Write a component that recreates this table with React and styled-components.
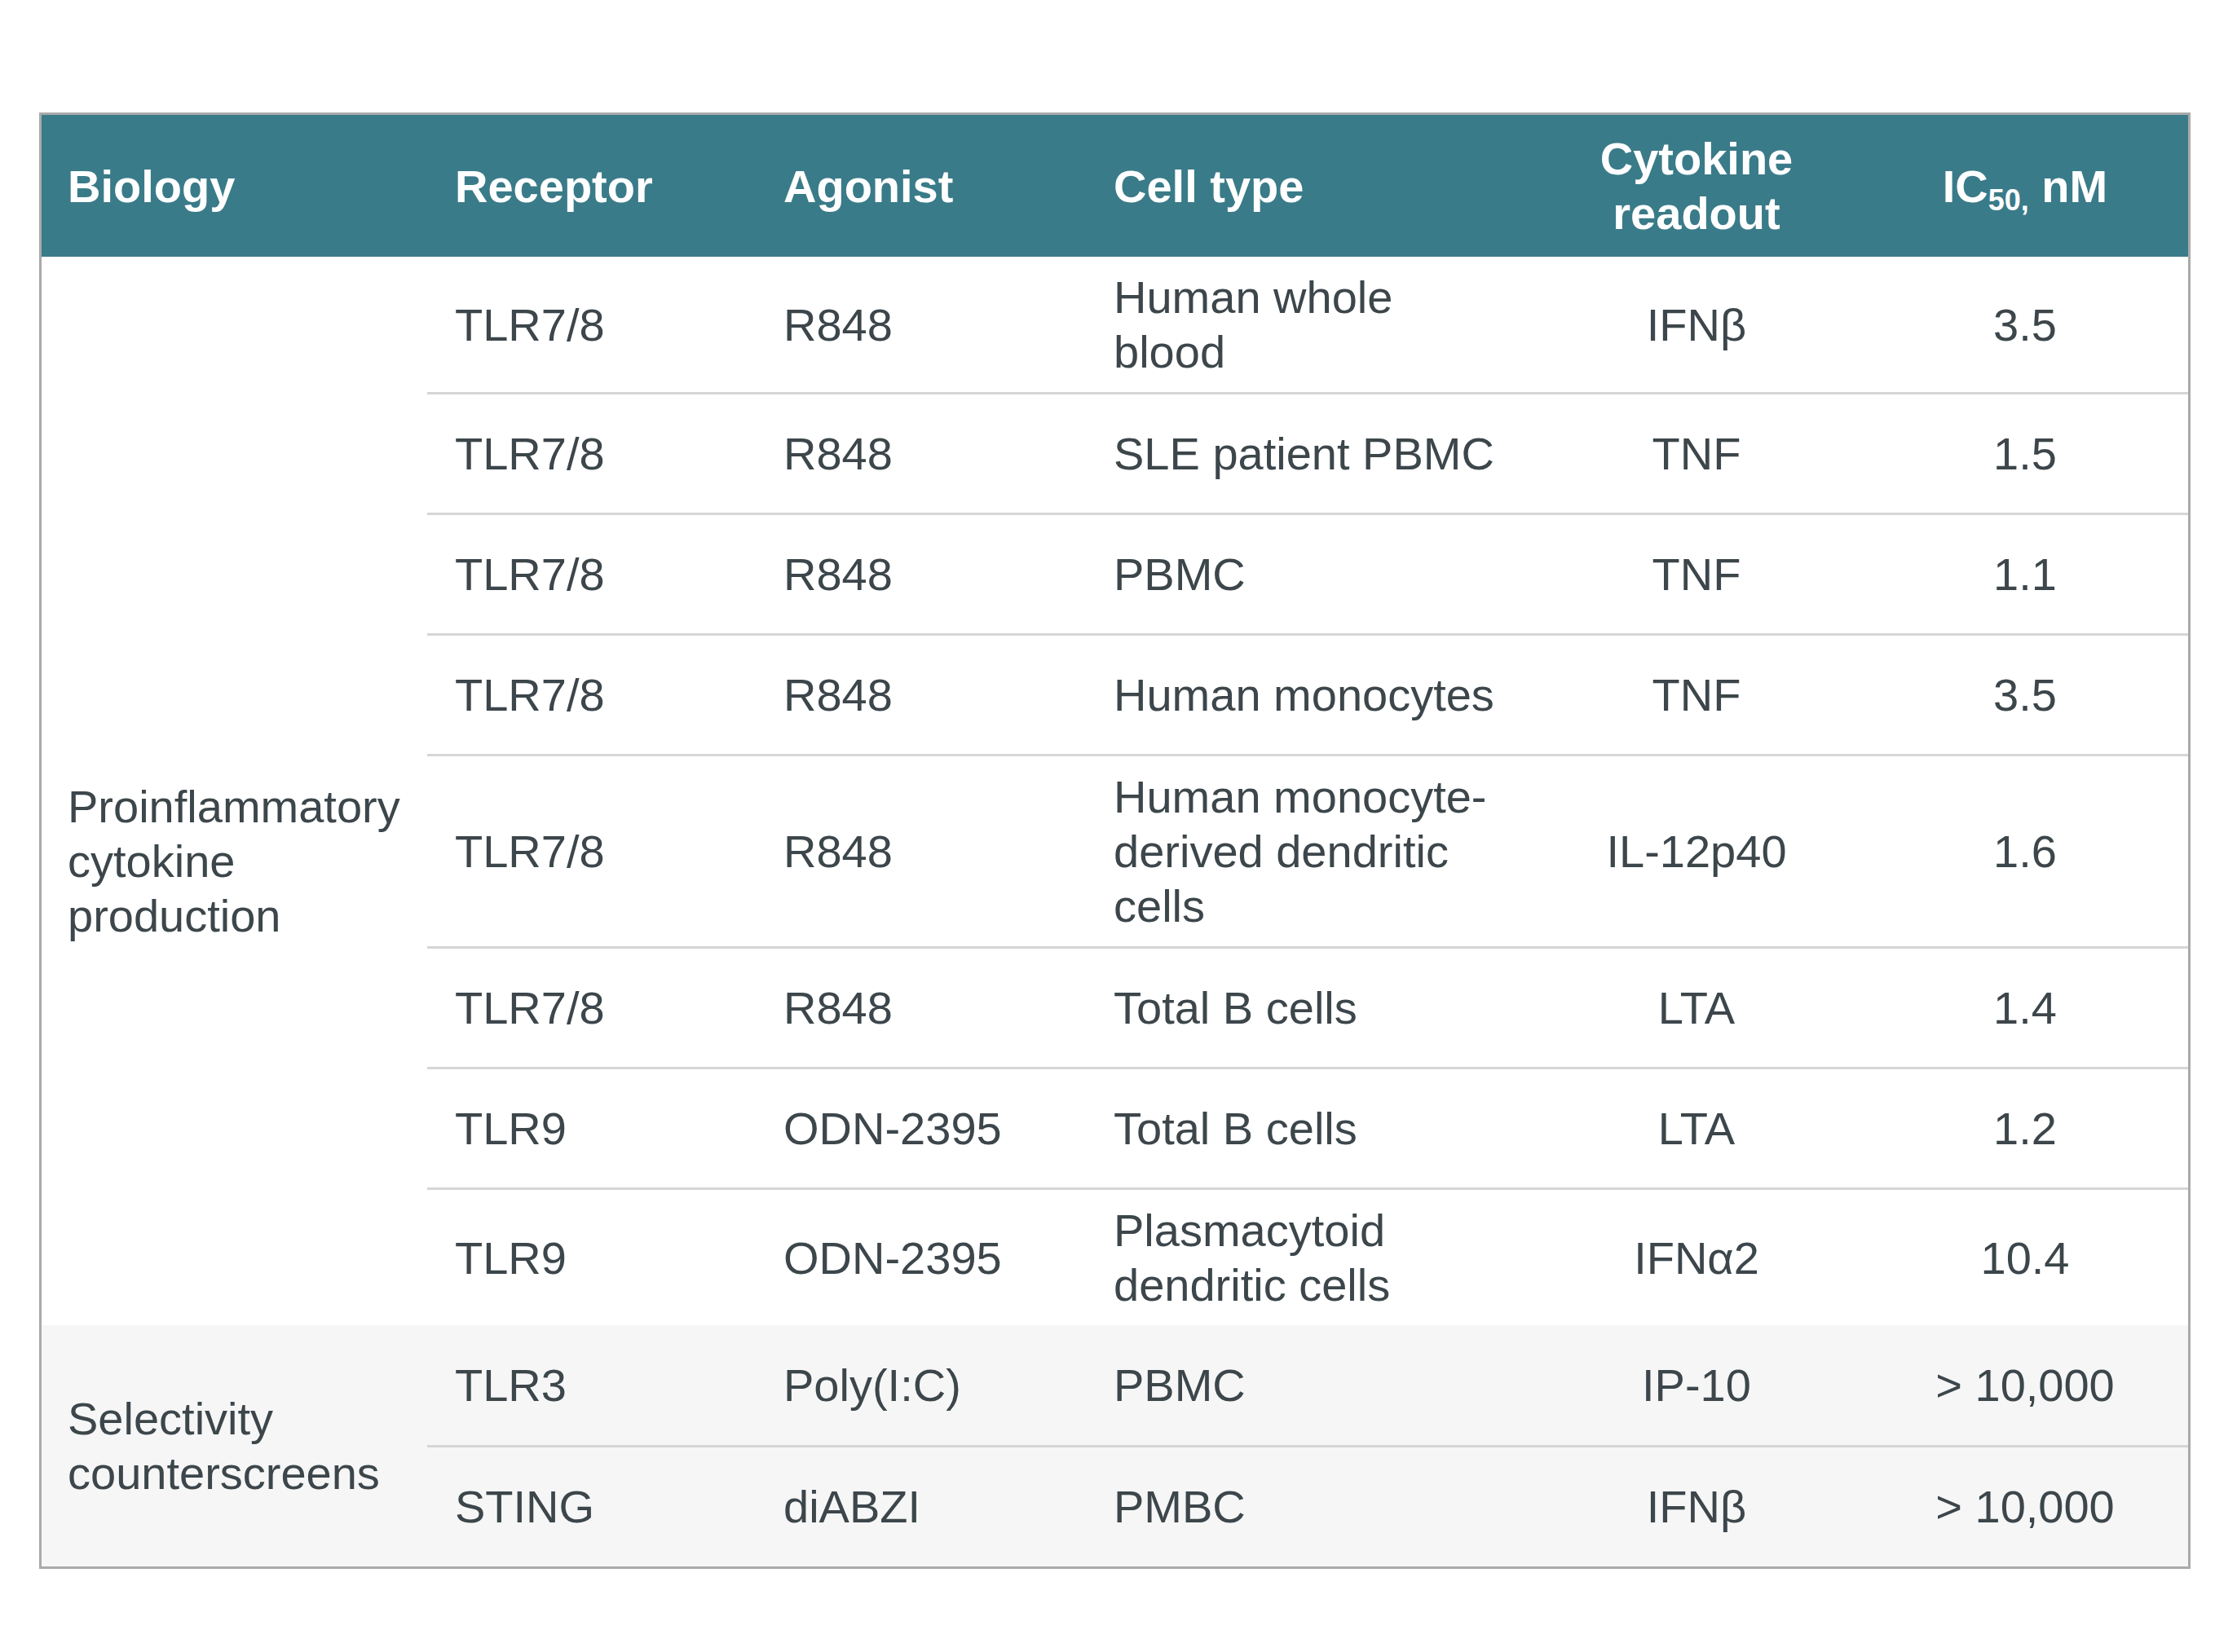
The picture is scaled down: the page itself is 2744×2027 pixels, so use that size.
import React from "react";
import styled, { createGlobalStyle } from "styled-components";

const GlobalStyle = createGlobalStyle`
  body {
    margin: 0;
    background: #ffffff;
    font-family: "Liberation Sans", Arial, sans-serif;
  }
`;

const rows = [
  { receptor: "TLR7/8", agonist: "R848", cell: "Human whole blood", readout: "IFNβ", ic50: "3.5" },
  { receptor: "TLR7/8", agonist: "R848", cell: "SLE patient PBMC", readout: "TNF", ic50: "1.5" },
  { receptor: "TLR7/8", agonist: "R848", cell: "PBMC", readout: "TNF", ic50: "1.1" },
  { receptor: "TLR7/8", agonist: "R848", cell: "Human monocytes", readout: "TNF", ic50: "3.5" },
  { receptor: "TLR7/8", agonist: "R848", cell: "Human monocyte-derived dendritic cells", readout: "IL-12p40", ic50: "1.6" },
  { receptor: "TLR7/8", agonist: "R848", cell: "Total B cells", readout: "LTA", ic50: "1.4" },
  { receptor: "TLR9", agonist: "ODN-2395", cell: "Total B cells", readout: "LTA", ic50: "1.2" },
  { receptor: "TLR9", agonist: "ODN-2395", cell: "Plasmacytoid dendritic cells", readout: "IFNα2", ic50: "10.4" },
];

const counters = [
  { receptor: "TLR3", agonist: "Poly(I:C)", cell: "PBMC", readout: "IP-10", ic50: "> 10,000" },
  { receptor: "STING", agonist: "diABZI", cell: "PMBC", readout: "IFNβ", ic50: "> 10,000" },
];

export default function App() {
  const renderGroup = (list, label, shaded, offset) =>
    list.map((r, i) => {
      const line = i < list.length - 1;
      return (
        <Row key={label + i} $shaded={shaded}>
          {i === 0 && (
            <GroupCell rowSpan={list.length} $offset={offset}>
              {label}
            </GroupCell>
          )}
          <Cell $line={line}>{r.receptor}</Cell>
          <Cell $line={line}>{r.agonist}</Cell>
          <Cell $line={line}>{r.cell}</Cell>
          <Cell $center $line={line}>{r.readout}</Cell>
          <Cell $center $line={line}>{r.ic50}</Cell>
        </Row>
      );
    });

  return (
    <Page>
      <GlobalStyle />
      <Frame>
        <Table>
          <colgroup>
            <col style={{ width: 473 }} />
            <col style={{ width: 403 }} />
            <col style={{ width: 405 }} />
            <col style={{ width: 546 }} />
            <col style={{ width: 406 }} />
            <col style={{ width: 400 }} />
          </colgroup>
          <thead>
            <HeadRow>
              <HeadCell $first>Biology</HeadCell>
              <HeadCell>Receptor</HeadCell>
              <HeadCell>Agonist</HeadCell>
              <HeadCell>Cell type</HeadCell>
              <HeadCell $center>
                Cytokine
                <br />
                readout
              </HeadCell>
              <HeadCell $center>
                IC<Sub>50,</Sub> nM
              </HeadCell>
            </HeadRow>
          </thead>
          <tbody>
            {renderGroup(rows, "Proinflammatory cytokine production", false, 172)}
            {renderGroup(counters, "Selectivity counterscreens", true, 0)}
          </tbody>
        </Table>
      </Frame>
    </Page>
  );
}

const Page = styled.div`
  padding: 138px 0 0 48px;
`;

const Frame = styled.div`
  width: 2639px;
  border: 3px solid #aaaaaa;
  box-sizing: border-box;
  background: #ffffff;
`;

const Table = styled.table`
  width: 2633px;
  border-collapse: collapse;
  table-layout: fixed;
  font-family: "Liberation Sans", Arial, sans-serif;
  font-size: 56px;
  line-height: 67px;
  color: #3c464b;
`;

const HeadRow = styled.tr`
  height: 174px;
  background: #3a7b89;
`;

const HeadCell = styled.th`
  padding-top: 0;
  padding-bottom: 0;
  padding-left: ${(p) => (p.$first ? "32px" : p.$center ? "0" : "34px")};
  padding-right: ${(p) => (p.$center ? "0" : "16px")};
  color: #ffffff;
  font-weight: 700;
  text-align: ${(p) => (p.$center ? "center" : "left")};
  vertical-align: middle;
`;

const Sub = styled.sub`
  font-size: 36px;
  line-height: 0;
  vertical-align: -10px;
`;

const Row = styled.tr`
  height: 148px;
  background: ${(p) => (p.$shaded ? "#f6f6f6" : "#ffffff")};
`;

const GroupCell = styled.td`
  padding: ${(p) => 16 + p.$offset}px 12px 16px 32px;
  vertical-align: middle;
  text-align: left;
`;

const Cell = styled.td`
  padding: 16px ${(p) => (p.$center ? "0" : "20px")} 16px ${(p) => (p.$center ? "0" : "34px")};
  vertical-align: middle;
  text-align: ${(p) => (p.$center ? "center" : "left")};
  border-bottom: ${(p) => (p.$line ? "3px solid #d6d6d6" : "none")};
`;
